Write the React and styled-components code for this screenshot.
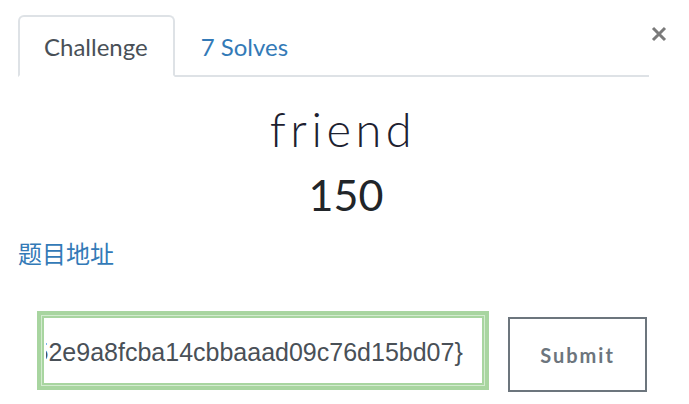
import React, { useEffect, useRef } from "react";
import styled, { createGlobalStyle } from "styled-components";

const GlobalStyle = createGlobalStyle`
  body {
    margin: 0;
    background: #fff;
    font-family: "Lato", "Noto Sans", sans-serif;
  }
`;

const Modal = styled.div`
  padding: 15px 0 0 18px;
  width: 671px;
`;

const Header = styled.div`
  display: flex;
  align-items: flex-start;
`;

const Tabs = styled.div`
  display: flex;
  width: 631px;
  border-bottom: 2px solid #dee2e6;
`;

const Tab = styled.div`
  height: 62px;
  box-sizing: border-box;
  padding: 0 25px 0 24px;
  display: flex;
  align-items: center;
  font-size: 24px;
  margin-bottom: -2px;
  border: 2px solid ${(p) => (p.active ? "#dee2e6" : "transparent")};
  border-bottom-color: ${(p) => (p.active ? "#fff" : "transparent")};
  border-radius: 6px 6px 0 0;
  background: ${(p) => (p.active ? "#fff" : "transparent")};
  color: ${(p) => (p.active ? "#495057" : "#337ab7")};
`;

const Close = styled.button`
  border: none;
  background: none;
  padding: 0;
  margin: 11px 0 0 2px;
  width: 16px;
  height: 16px;
  display: flex;
  cursor: pointer;
`;

const Body = styled.div`
  width: 650px;
`;

const Name = styled.h2`
  margin: 24px 0 0;
  text-align: center;
  font-size: 47px;
  font-weight: 300;
  letter-spacing: 4.5px;
  line-height: 56px;
  color: #1d2130;
`;

const Value = styled.h3`
  margin: 12px 0 0;
  text-align: center;
  font-size: 43px;
  font-weight: 400;
  line-height: 52px;
  color: #212529;
  padding-left: 6px;
`;

const Link = styled.a`
  display: inline-block;
  margin-top: 16px;
  font-family: "Noto Sans CJK SC", sans-serif;
  font-size: 24px;
  line-height: 32px;
  color: #337ab7;
  text-decoration: none;
`;

const Form = styled.div`
  display: flex;
  align-items: flex-start;
  margin: 47px 0 0 24px;
  gap: 24px;
`;

const FlagInput = styled.input`
  box-sizing: border-box;
  width: 442px;
  height: 69px;
  padding: 4px 19px 0 2px;
  border: 2px solid #a8d5a0;
  box-shadow: 0 0 0 1px #d3ebcf, 0 0 0 5px #a8d5a0;
  outline: none;
  font-family: "Liberation Sans", Arial, sans-serif;
  font-size: 25px;
  color: #495057;
`;

const SubmitButton = styled.button`
  box-sizing: border-box;
  width: 139px;
  height: 75px;
  margin-top: 1px;
  background: #fff;
  border: 2px solid #6c757d;
  color: #6c757d;
  font-family: "Lato", sans-serif;
  font-weight: 700;
  font-size: 20px;
  letter-spacing: 2px;
  cursor: pointer;
`;

const App = () => {
  const inputRef = useRef(null);

  useEffect(() => {
    const el = inputRef.current;
    if (el) el.scrollLeft = el.scrollWidth;
  }, []);

  return (
    <>
      <GlobalStyle />
      <Modal>
        <Header>
          <Tabs>
            <Tab active>Challenge</Tab>
            <Tab>7 Solves</Tab>
          </Tabs>
          <Close aria-label="Close">
            <svg width="16" height="16" viewBox="0 0 16 16">
              <path
                d="M2 2 L14 14 M14 2 L2 14"
                stroke="#7a7a7a"
                strokeWidth="3"
                strokeLinecap="butt"
              />
            </svg>
          </Close>
        </Header>
        <Body>
          <Name>friend</Name>
          <Value>150</Value>
          <Link href="#">题目地址</Link>
          <Form>
            <FlagInput
              ref={inputRef}
              defaultValue="flag{e52e9a8fcba14cbbaaad09c76d15bd07}"
            />
            <SubmitButton>Submit</SubmitButton>
          </Form>
        </Body>
      </Modal>
    </>
  );
};

export default App;
